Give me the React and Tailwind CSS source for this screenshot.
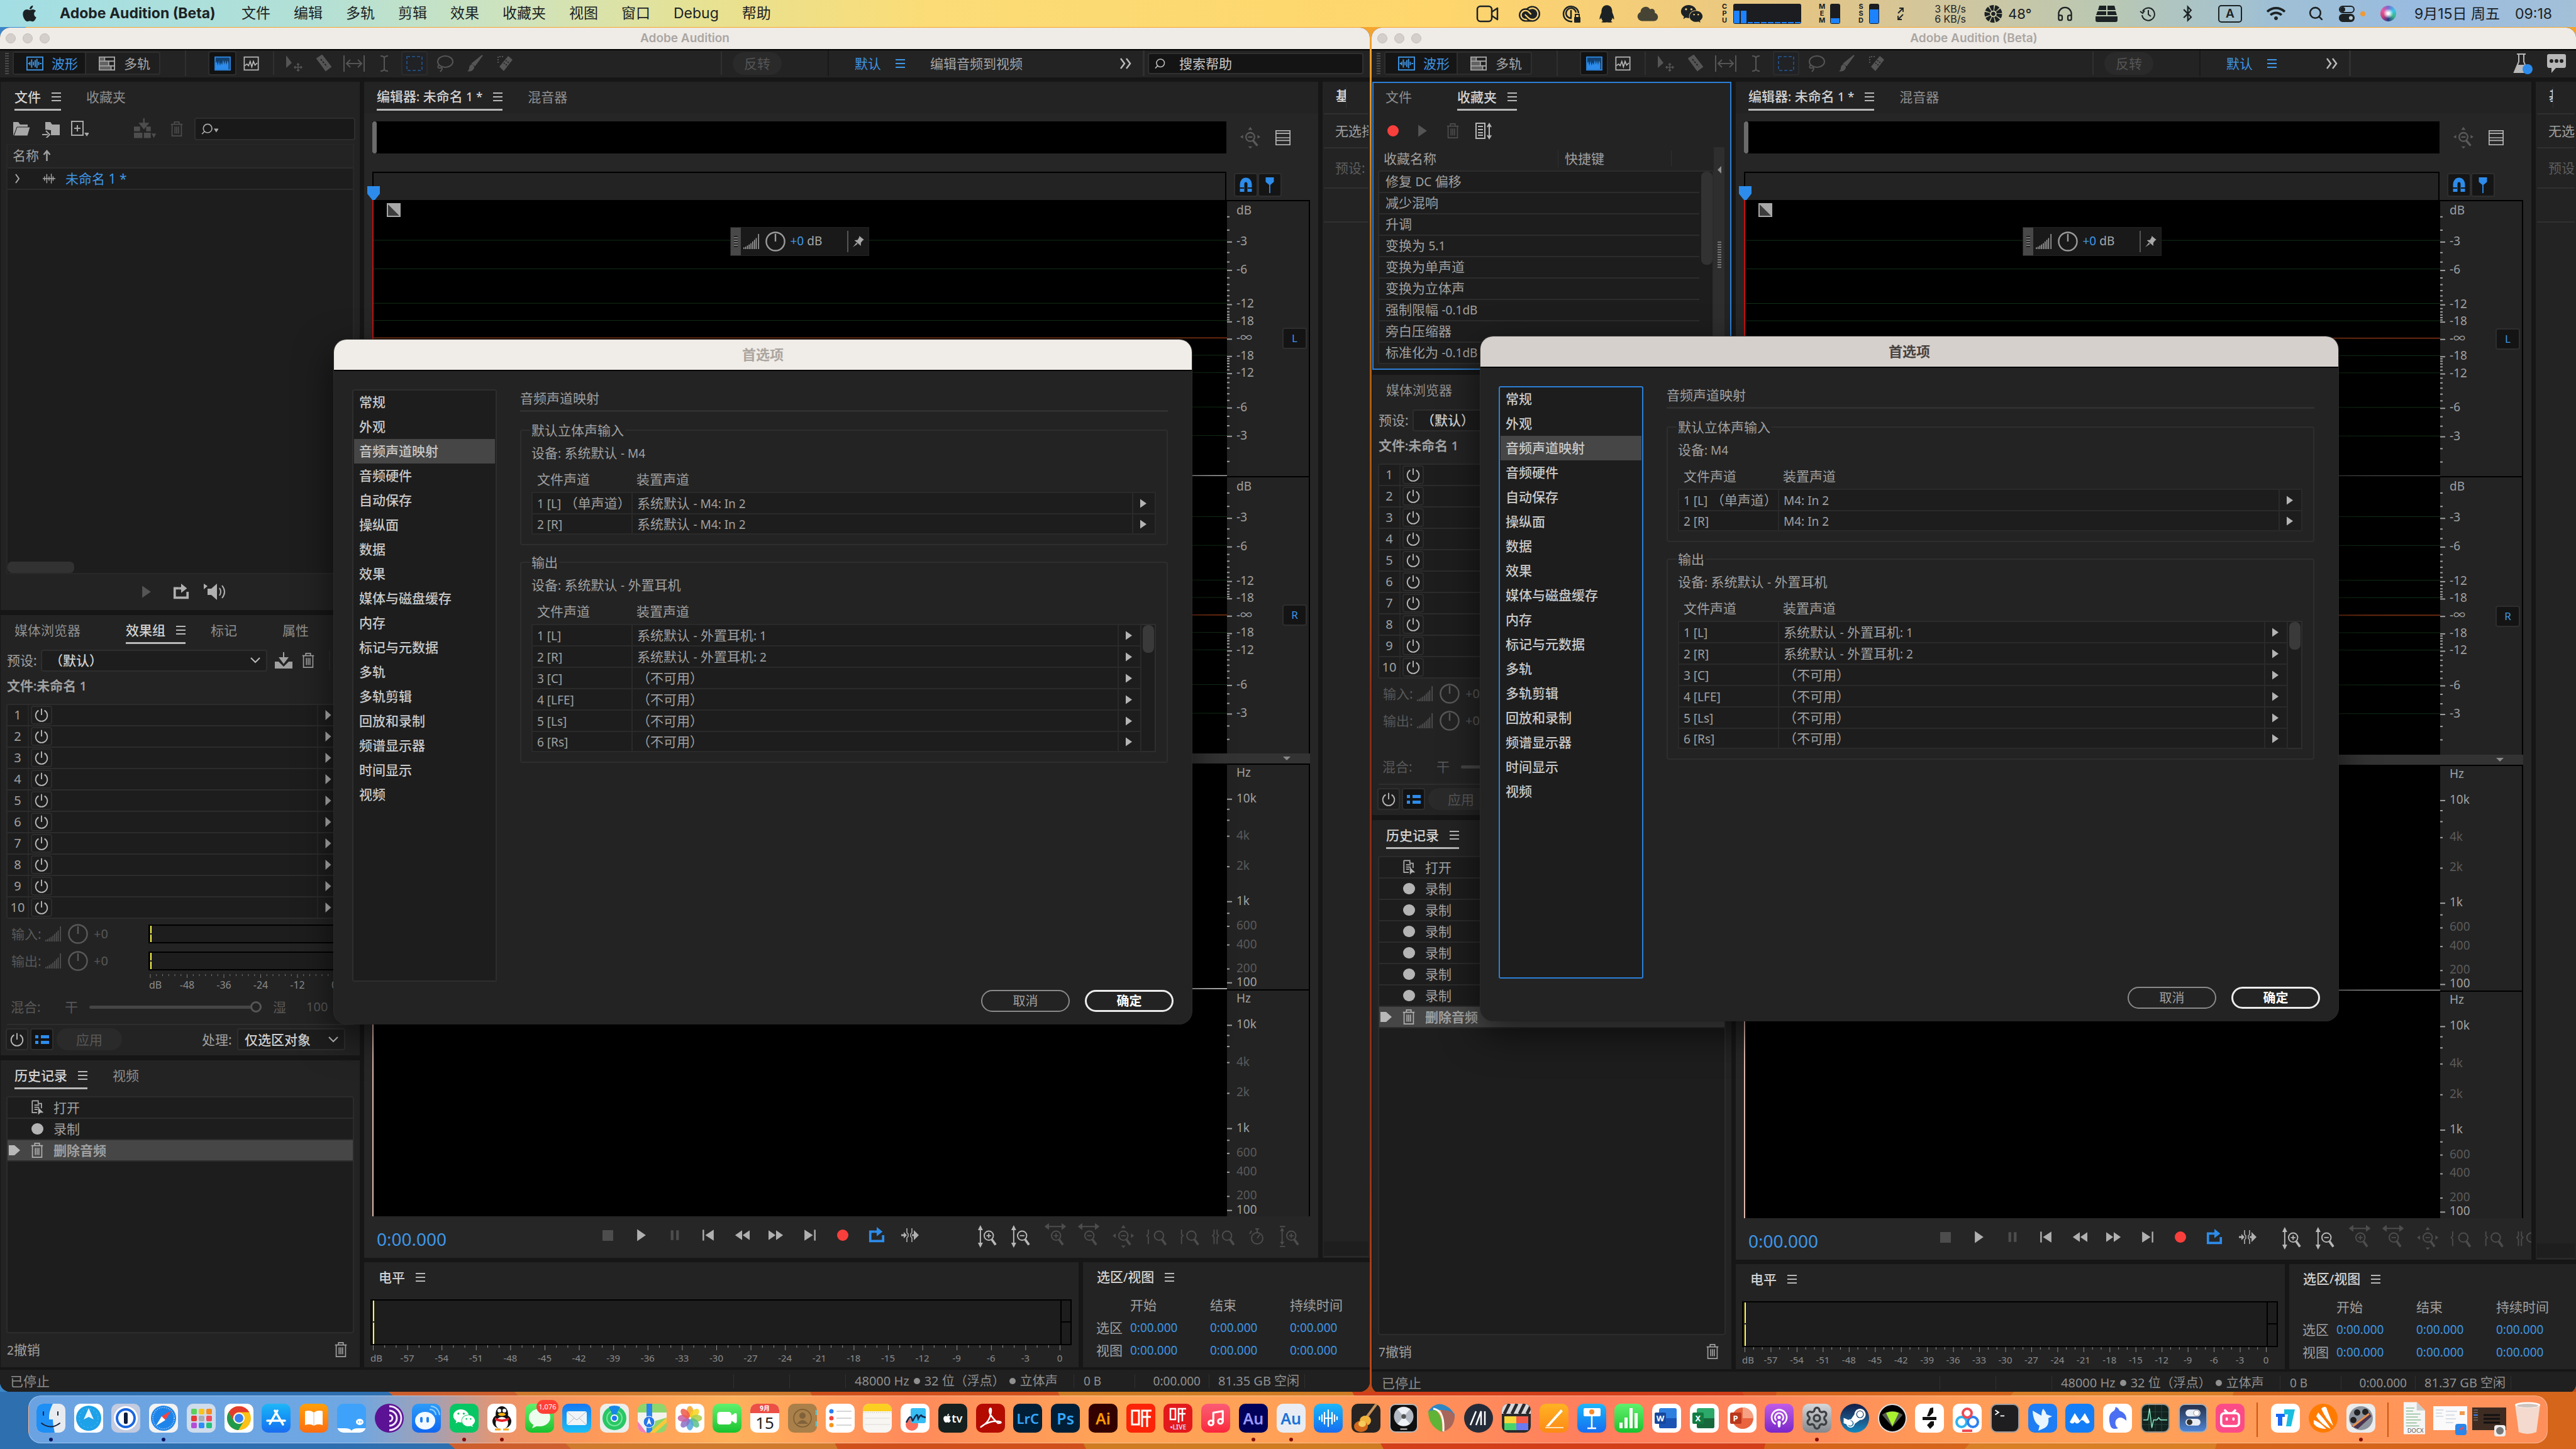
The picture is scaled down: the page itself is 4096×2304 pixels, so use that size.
import { Fragment } from "react";
import { FaApple, FaBluetoothB, FaWifi, FaWeixin, FaQq, FaSteamSymbol, FaCloud } from "react-icons/fa";
import { SiAdobecreativecloud, SiBilibili } from "react-icons/si";
import { Search, Headphones, Music, Video, Podcast, Settings } from "lucide-react";

// Latin runs sit one step smaller than the Chinese text around them
function Mix({ children }) {
    return String(children).split(/([\x21-\x7e]+(?: [\x21-\x7e]+)*)/).map((part, i) =>
        i % 2 ? <span key={i} className="text-[19px]">{part}</span> : <Fragment key={i}>{part}</Fragment>
    );
}

function MenuGlyph({ className = "" }) {
    return (
        <svg viewBox="0 0 15 14" className={`w-[15px] h-[14px] shrink-0 ${className}`} fill="none" stroke="currentColor" strokeWidth="2">
            <path d="M0 1h15M0 7h15M0 13h15" />
        </svg>
    );
}

function Ico({ size = "w-[28px] h-[28px]", className = "", children }) {
    return (
        <svg viewBox="0 0 28 28" className={`shrink-0 ${size} ${className}`} fill="none" stroke="currentColor" strokeWidth="2">
            {children}
        </svg>
    );
}

const WaveIcon = () => (
    <Ico size="w-[30px] h-[26px]">
        <rect x="1" y="3" width="27" height="22" />
        <path d="M3 14h3M6 11v6M9 7v14M12 11v6M15 8v12M18 6v16M21 11v6M23 14h3" />
    </Ico>
);
const MultiIcon = () => (
    <Ico size="w-[28px] h-[26px]">
        <rect x="1" y="3" width="26" height="22" />
        <path d="M1 10h26M1 18h26M10 3v7M17 10v8M21 18v7" />
        <path d="M2 4h7v5H2zM2 11h14v6H2zM2 19h18v5H2z" fill="currentColor" fillOpacity=".5" stroke="none" />
    </Ico>
);
const TrashIcon = ({ className }) => (
    <Ico size="w-[26px] h-[28px]" className={className}>
        <path d="M4 6h20M10 6V2h8v4M6 6v20h16V6M11 10v12M14 10v12M17 10v12" strokeWidth="1.8" />
    </Ico>
);
const PowerIcon = () => (
    <Ico size="w-[26px] h-[26px]">
        <path d="M14 3v11M9 6a10 10 0 1 0 10 0" />
    </Ico>
);
const LoopIcon = ({ className }) => (
    <Ico size="w-[28px] h-[26px]" className={className}>
        <path d="M10 8H3v16h22V14" strokeWidth="4" />
        <path d="M10 8h6" strokeWidth="4" />
        <path d="M14 0l10 8-10 8z" fill="currentColor" stroke="none" />
    </Ico>
);
const BarsIcon = ({ className }) => (
    <Ico size="w-[28px] h-[26px]" className={className}>
        <path d="M1 27v-3M4 27v-4M7 27v-6M10 27v-8M13 27V17M16 27V14M19 27V11M22 27V8M26 27V1" strokeWidth="1.6" />
    </Ico>
);
const KnobIcon = ({ className }) => (
    <Ico size="w-[34px] h-[34px]" className={className}>
        <circle cx="14" cy="14" r="12" />
        <path d="M14 4v10" />
    </Ico>
);

/* ---------- menu bar ---------- */

const menus = ["文件", "编辑", "多轨", "剪辑", "效果", "收藏夹", "视图", "窗口", "Debug", "帮助"];

function Stack({ word }) {
    return (
        <span className="w-[10px] flex flex-col items-center text-[11px] leading-[11px] font-bold">
            {word.split("").map((c, i) => <span key={i}>{c}</span>)}
        </span>
    );
}

function MenuBar() {
    return (
        <header className="h-[43px] shrink-0 flex items-center text-[22px] text-[#1c2224] font-['Inter','Noto_Sans_CJK_SC',sans-serif] bg-[linear-gradient(to_right,#a3dee4_0%,#b2e0d6_12%,#cfe3bd_20%,#e6e294_27%,#fbdc76_36%,#fed66c_56%,#f7cf77_62%,#e3c585_70%,#d3c69c_75%,#b9c8b4_82%,#9fc0d4_88%,#99bbe0_94%,#a3c0d8_100%)]">
            <FaApple className="ml-[34px] w-[26px] h-[29px]" />
            <nav className="ml-[35px] pb-[2px] flex items-center gap-[37px] whitespace-nowrap">
                <span className="text-[23px] w-[252px] font-bold">Adobe Audition (Beta)</span>
                {menus.map((m) => <a href="#menu" key={m} className="text-[23px]">{m}</a>)}
            </nav>
            <div className="ml-auto pr-[33px] flex items-center whitespace-nowrap">
                <svg viewBox="0 0 36 28" className="w-[36px] h-[28px]" fill="none" stroke="currentColor" strokeWidth="2.5">
                    <rect x="2" y="2" width="23" height="24" rx="5" /><path d="M25 11l9-6v18l-9-6" strokeLinejoin="round" />
                </svg>
                <SiAdobecreativecloud className="ml-[32px] w-[34px] h-[34px]" />
                <svg viewBox="0 0 30 30" className="ml-[35px] w-[30px] h-[30px]" fill="none" stroke="currentColor" strokeWidth="2.5">
                    <path d="M26 14A12 12 0 1 0 16 27M22 13a8 8 0 1 0-7 9M14 9v12" /><rect x="19" y="20" width="10" height="9" rx="1" fill="currentColor" stroke="none" /><path d="M21 20v-4h6v4" strokeWidth="2" />
                </svg>
                <FaQq className="ml-[29px] w-[24px] h-[30px]" />
                <FaCloud className="ml-[35px] w-[36px] h-[26px] opacity-80" />
                <FaWeixin className="ml-[34px] w-[36px] h-[32px]" />
                <span className="ml-[29px]"><Stack word="CPU" /></span>
                <div className="ml-[9px] w-[108px] h-[32px] rounded-[3px] bg-[#1b1d20] px-[1px] pb-[1px] flex items-end gap-[2px]">
                    {[20, 20, 2, 2, 2, 2, 2, 2, 2, 2].map((h, i) => <i key={i} className="flex-1 bg-[#1c82ff]" style={{ height: h }}></i>)}
                </div>
                <span className="ml-[28px]"><Stack word="MEM" /></span>
                <div className="ml-[8px] w-[16px] h-[32px] rounded-[3px] bg-[#1b1d20] p-[1px] flex items-end"><i className="w-full h-[8px] bg-[#1c82ff]"></i></div>
                <span className="ml-[28px]"><Stack word="SSD" /></span>
                <div className="ml-[8px] w-[16px] h-[32px] rounded-[3px] bg-[#1b1d20] p-[1px] flex items-end"><i className="w-full h-[22px] bg-[#1c82ff]"></i></div>
                <svg viewBox="0 0 10 22" className="ml-[29px] w-[10px] h-[22px]" fill="none" stroke="currentColor" strokeWidth="1.8"><path d="M1 10l8-8M3 2h6v6M9 12l-8 8M1 14v6h6" /></svg>
                <div className="ml-[49px] w-[50px] text-[16px] leading-[16px] text-right"><div>3 KB/s</div><div>6 KB/s</div></div>
                <svg viewBox="0 0 30 30" className="ml-[29px] w-[29px] h-[30px]" fill="none" stroke="currentColor">
                    <circle cx="15" cy="15" r="10" strokeWidth="9" strokeDasharray="5.5 1.5" /><circle cx="15" cy="15" r="3" fill="currentColor" />
                </svg>
                <span className="ml-[9px] w-[38px]">48°</span>
                <Headphones className="ml-[39px] w-[27px] h-[30px]" strokeWidth={2} />
                <svg viewBox="0 0 37 26" className="ml-[34px] w-[37px] h-[26px]" fill="currentColor"><path d="M7 0h11v7H5zM20 0h11l2 7H20zM4 9h14v6H2zM20 9h13l2 6H20zM1 17h35v6q0 3-3 3H4q-3 0-3-3z" /></svg>
                <svg viewBox="0 0 26 24" className="ml-[34px] w-[26px] h-[24px]" fill="none" stroke="currentColor" strokeWidth="2"><path d="M5 8a10 10 0 1 1-1 6M1 8l4 3 3-4M14 6v7l4 3" /></svg>
                <FaBluetoothB className="ml-[42px] w-[17px] h-[27px]" />
                <span className="ml-[40px] w-[38px] h-[28px] border-2 border-[#1c2224] rounded-[5px] flex items-center justify-center text-[19px] font-semibold">A</span>
                <FaWifi className="ml-[39px] w-[30px] h-[25px]" />
                <Search className="ml-[36px] w-[25px] h-[25px]" strokeWidth={2.5} />
                <svg viewBox="0 0 25 26" className="ml-[24px] w-[25px] h-[26px]" fill="none" stroke="currentColor" strokeWidth="2"><rect x="1" y="1" width="23" height="10" rx="5" /><circle cx="6" cy="6" r="3" fill="currentColor" /><rect x="1" y="14" width="23" height="11" rx="5" fill="currentColor" /><circle cx="19" cy="19.5" r="3" fill="#b9c9cf" stroke="none" /></svg>
                <i className="ml-[9px] w-[8px] h-[8px] rounded-full bg-[#f09a36]"></i>
                <i className="ml-[24px] w-[25px] h-[25px] rounded-full bg-[radial-gradient(#ffffff_8%,transparent_45%),conic-gradient(#7a6ad0,#3ac6e8,#38b48a,#2b3a88,#c8407a,#e85aa0,#7a6ad0)]"></i>
                <span className="ml-[29px] w-[145px] text-[23px]">9月15日 周五</span>
                <span className="ml-[15px] w-[64px] text-[23px]">09:18</span>
            </div>
        </header>
    );
}

/* ---------- shared panel parts ---------- */

function Tabs({ items, active, pad = "pl-[22px]", line = true }) {
    return (
        <div className={`h-[50px] shrink-0 flex gap-[40px] overflow-hidden ${pad}`}>
            {items.map((t) => (
                <button key={t} className={`h-[46px] flex items-center pt-[4px] gap-[17px] whitespace-nowrap border-b-[3px] ${t === active ? "text-[#d2d2d2] font-medium" : "text-[#8f8f8f]"} ${t === active && line ? "border-[#b8b8b8]" : "border-transparent"}`}>
                    <span><Mix>{t}</Mix></span>
                    <MenuGlyph className={t === active ? "text-[#b8b8b8]" : "invisible"} />
                </button>
            ))}
        </div>
    );
}

function Pick({ label, value, className }) {
    return (
        <label className={`flex items-center h-[35px] border-2 border-[#2e2e2e] bg-[#1d1d1d] rounded-[4px] text-[#d0d0d0] font-medium ${className}`}>
            <select aria-label={label} className="flex-1 min-w-0 appearance-none bg-transparent outline-none">
                <option>{value}</option>
            </select>
            <svg viewBox="0 0 16 10" className="w-[16px] h-[10px] mr-[9px]" fill="none" stroke="#b8b8b8" strokeWidth="2"><path d="M1 1l7 7 7-7" /></svg>
        </label>
    );
}

const Play = ({ className }) => <Ico size="w-[24px] h-[24px]" className={className}><path d="M6 3l16 11L6 25z" fill="currentColor" stroke="none" /></Ico>;

function AppToolbar({ beta }) {
    const tools = [
        <Ico key="move"><path d="M2 1v20l9-8z" fill="currentColor" stroke="none" /><path d="M15 20h12M21 14v12M19 16l2-2 2 2M19 24l2 2 2-2M17 18l-2 2 2 2M25 18l2 2-2 2" strokeWidth="1.5" /></Ico>,
        <Ico key="razor"><path d="M3 6l8-5 14 18-8 6z" fill="currentColor" /><path d="M9 7l10 12" stroke="#232323" strokeDasharray="3 2" /></Ico>,
        <Ico key="slip" size="w-[36px] h-[28px]"><path d="M-2 1v26M30 1v26M3 14h22M8 8l-6 6 6 6M20 8l6 6-6 6" /></Ico>,
        <Ico key="time"><path d="M8 2q6 0 6 4v16q0 4-6 4M20 2q-6 0-6 4M14 22q0 4 6 4" /></Ico>,
        <span key="marquee" className="w-[42px] h-[39px] border-2 border-[#2c2c2c] rounded-[4px] bg-[#202225] flex items-center justify-center text-[#244a77]"><Ico><rect x="2" y="3" width="24" height="22" strokeDasharray="5 3" /></Ico></span>,
        <Ico key="lasso"><ellipse cx="15" cy="11" rx="12" ry="9" /><path d="M5 16q-4 6 2 5t0 6" /></Ico>,
        <Ico key="brush"><path d="M26 1L14 17l-4-3z" fill="currentColor" /><path d="M9 15q6 3 3 8-4 5-10 3 3-1 3-5 0-4 4-6z" fill="currentColor" stroke="none" /></Ico>,
        <Ico key="heal"><path d="M5 19L19 2l7 6-14 18z" fill="currentColor" stroke="none" /><path d="M3 13V3h10" strokeDasharray="2 2" /><path d="M12 13l8 6M15 9l8 6" stroke="#232323" strokeDasharray="2 2" /></Ico>,
    ];
    return (
        <div className="h-[43px] shrink-0 pb-[2px] flex items-center bg-[#232323] whitespace-nowrap text-[#a6a6a6]">
            <span className="ml-[8px] w-[6px] h-[34px] bg-[repeating-linear-gradient(to_bottom,#4a4a4a_0_2px,transparent_2px_4px)]"></span>
            <div className="ml-[6px] w-[235px] h-[37px] shrink-0 flex rounded-[4px] border-2 border-[#2e2e2e] bg-[#1f1f1f]">
                <button className="w-[115px] pl-[18px] flex items-center gap-[12px] bg-[#151515] border-r-2 border-[#2e2e2e] text-[#3f96e6]"><WaveIcon />波形</button>
                <button className="flex-1 pl-[19px] flex items-center gap-[13px]"><MultiIcon />多轨</button>
            </div>
            <i className="ml-[39px] w-[2px] h-full bg-[#303030]"></i>
            <button aria-label="波形显示" className="ml-[35px] w-[45px] h-[39px] border-2 border-[#2e2e2e] bg-[#121212] rounded-[4px] flex items-center justify-center text-[#2d8ceb]">
                <Ico size="w-[30px] h-[24px]"><rect x="0" y="2" width="28" height="24" fill="#12406e" stroke="currentColor" /><path d="M1 25V14l2-4 2 8 2-9 2 9 2-6 2 5 2-10 2 9 2-8 2 9 2-9 2 6v11z" fill="currentColor" stroke="none" /></Ico>
            </button>
            <button aria-label="频谱显示" className="ml-[9px] text-[#b8b8b8]">
                <Ico size="w-[29px] h-[24px]"><rect x="1" y="2" width="26" height="24" /><path d="M2 18l4-3 3 3 3-8 3 10 3-10 3 7 4-4" /></Ico>
            </button>
            <i className="ml-[20px] w-[2px] h-[37px] bg-[#303030]"></i>
            <div className="ml-[7px] w-[384px] shrink-0 grid grid-cols-8 place-items-center text-[#555]">{tools}</div>
            <div className="ml-[319px] h-full flex items-center">
                <i className="w-[2px] h-[37px] bg-[#303030]"></i>
                <button disabled className="ml-[17px] w-[78px] h-[36px] rounded-full bg-[#2a2a2a] text-[#555]">反转</button>
                <i className="ml-[73px] w-[2px] h-full bg-[#181818]"></i>
                <button className="ml-[41px] flex items-center gap-[23px] text-[#3f96e6]">默认<MenuGlyph /></button>
            </div>
            {!beta && <button className="ml-[40px]">编辑音频到视频</button>}
            <button aria-label="更多" className="ml-auto mr-[17px]">
                <svg viewBox="0 0 20 18" className="w-[20px] h-[18px]" fill="none" stroke="#bbb" strokeWidth="2.5"><path d="M2 1l6 8-6 8M11 1l6 8-6 8" /></svg>
            </button>
            <div className="w-[361px] h-full shrink-0 border-l-[3px] border-[#303030] flex items-center">
                {beta ? (
                    <div className="ml-auto mr-[16px] flex items-center gap-[22px] text-[#b8b8b8]">
                        <svg viewBox="0 0 34 34" className="w-[34px] h-[34px]" fill="none" stroke="currentColor" strokeWidth="2"><path d="M8 2h14M11 2v12L4 31h22L19 14V2" /><path d="M9 20h12l5 11H4z" fill="currentColor" /><circle cx="25" cy="26" r="8" fill="#2d8ceb" stroke="none" /></svg>
                        <svg viewBox="0 0 30 30" className="w-[30px] h-[30px]"><path d="M3 0h24q3 0 3 3v15q0 4-3 4H14l-7 8v-8H3q-3 0-3-4V3q0-3 3-3z" fill="currentColor" /><circle cx="7" cy="11" r="3" fill="#222" /><circle cx="15" cy="11" r="3" fill="#222" /><circle cx="23" cy="11" r="3" fill="#222" /></svg>
                    </div>
                ) : (
                    <label className="ml-[5px] mr-[10px] flex-1 h-[34px] border-2 border-[#303030] rounded-[4px] bg-[#141414] flex items-center">
                        <Search className="ml-[8px] w-[22px] h-[22px] -scale-x-100 text-[#bbb]" />
                        <input aria-label="搜索帮助" placeholder="搜索帮助" className="ml-[21px] w-full bg-transparent outline-none placeholder:text-[#c8c8c8]" />
                    </label>
                )}
            </div>
        </div>
    );
}

/* ---------- left column panels ---------- */

function FilesPanel() {
    return (
        <section className="h-[840px] shrink-0 bg-[#232323] flex flex-col">
            <Tabs items={["文件", "收藏夹"]} active="文件" />
            <div className="h-[49px] pl-[19px] pr-[7px] flex items-center text-[#a8a8a8]">
                <Ico><path d="M1 25V3h8l3 4h12v4H7z" fill="currentColor" stroke="none" /><path d="M7 11h21l-4 14H2z" fill="currentColor" stroke="#232323" strokeWidth="1" /></Ico>
                <Ico className="ml-[19px]"><path d="M5 15V3h8l3 4h12v17H14v-8z" fill="currentColor" stroke="none" /><path d="M0 23h9M6 17l6 6-6 6" /></Ico>
                <Ico className="ml-[18px]"><rect x="1" y="2" width="18" height="22" /><path d="M10 8v10M5 13h10" /><path d="M21 20h8l-4 6z" fill="currentColor" stroke="none" /></Ico>
                <Ico size="w-[36px] h-[34px]" className="ml-[71px] text-[#4d4d4d]"><path d="M13 0v10M8 7l5 6 5-6z" fill="currentColor" /><path d="M0 11h8v6H0zM16 11h6v6h-6zM0 19h11v7H0zM13 19h9v7h-9z" fill="currentColor" stroke="none" /><path d="M23 20h6l-3 6z" fill="currentColor" stroke="none" /></Ico>
                <TrashIcon className="ml-[20px] text-[#4d4d4d]" />
                <label className="ml-auto w-[256px] h-[36px] border-2 border-[#2e2e2e] rounded-[4px] bg-[#191919] flex items-center">
                    <Search className="ml-[8px] w-[24px] h-[24px] -scale-x-100" />
                    <svg viewBox="0 0 8 6" className="w-[9px] h-[7px] mt-[6px]" fill="currentColor"><path d="M0 0h8L4 6z" /></svg>
                    <input aria-label="搜索文件" className="w-full bg-transparent outline-none" />
                </label>
            </div>
            <div className="mx-[9px] flex-1 flex flex-col border-2 border-[#282828] border-t">
                <div className="h-[36px] pl-[8px] pb-[2px] flex items-center gap-[5px] text-[#a0a0a0]">名称
                    <svg viewBox="0 0 14 18" className="w-[15px] h-[18px]" fill="none" stroke="currentColor" strokeWidth="2.5"><path d="M7 18V2M2 8l5-6 5 6" /></svg>
                </div>
                <div className="flex-1 flex flex-col bg-[#1d1d1d] border-t-2 border-[#2c2c2c]">
                    <div className="h-[34px] pl-[12px] flex items-center border-b-2 border-[#2c2c2c] text-[#3f96e6]">
                        <svg viewBox="0 0 8 16" className="w-[8px] h-[16px]" fill="none" stroke="#a8a8a8" strokeWidth="2"><path d="M1 1l5 7-5 7" /></svg>
                        <Ico size="w-[26px] h-[20px]" className="ml-[33px] text-[#a8a8a8]"><path d="M0 14h28M4 9v10M9 4v20M14 9v10M19 3v22M23 9v10" /></Ico>
                        <span className="ml-[13px]">未命名 1 *</span>
                    </div>
                    <i className="mt-auto w-[106px] h-[18px] rounded-[7px] bg-[#323232]"></i>
                </div>
            </div>
            <div className="h-[57px] pl-[220px] pb-[2px] flex items-center text-[#b0b0b0]">
                <Play className="text-[#555]" />
                <LoopIcon className="ml-[29px]" />
                <Ico size="w-[42px] h-[28px]" className="ml-[21px]"><path d="M-6 1l6 4-6 5zM0 9h6l9-8v26l-9-8H0z" fill="currentColor" stroke="none" /><path d="M19 8q4 6 0 12M23 4q8 10 0 20" /></Ico>
            </div>
        </section>
    );
}

const favorites = ["修复 DC 偏移", "减少混响", "升调", "变换为 5.1", "变换为单声道", "变换为立体声", "强制限幅 -0.1dB", "旁白压缩器", "标准化为 -0.1dB"];

function FavoritesPanel() {
    return (
        <section className="h-[458px] shrink-0 bg-[#232323] outline-2 -outline-offset-2 outline-[#2d7fd6] flex flex-col text-[#a0a0a0]">
            <Tabs items={["文件", "收藏夹"]} active="收藏夹" pad="pl-[21px]" />
            <div className="h-[54px] pl-[24px] pt-[2px] flex items-center">
                <i className="w-[18px] h-[18px] rounded-full bg-[#f93f3c]"></i>
                <Play className="ml-[26px] text-[#555]" />
                <TrashIcon className="ml-[23px] text-[#4d4d4d]" />
                <Ico className="ml-[22px] text-[#b8b8b8]"><rect x="2" y="2" width="14" height="24" /><path d="M5 7h8M5 12h8M5 17h8M5 21h8M23 5v19M20 8l3-5 3 5M20 21l3 5 3-5" /></Ico>
            </div>
            <div className="flex-1 pl-[9px] pb-[9px] flex min-h-0">
                <div className="w-[534px] flex flex-col">
                    <div className="h-[37px] shrink-0 pl-[9px] pb-[2px] flex items-center">
                        <span className="w-[277px]">收藏名称</span>
                        <span className="w-[180px] pl-[10px] border-l border-[#303030]">快捷键</span>
                        <i className="h-[25px] border-l border-[#303030]"></i>
                    </div>
                    <div className="flex-1 min-h-0 flex border-2 border-[#2c2c2c] rounded-[4px] bg-[#1d1d1d]">
                        <ul className="flex-1">
                            {favorites.map((f) => <li key={f} className="h-[34px] pl-[10px] pb-[2px] flex items-center border-b-2 border-[#2c2c2c] whitespace-pre"><span><Mix>{f}</Mix></span></li>)}
                        </ul>
                        <i className="ml-[3px] w-[18px] h-[148px] rounded-[8px] bg-[#323232]"></i>
                    </div>
                </div>
                <div className="w-[17px] bg-[#2e2e2e] flex flex-col items-center">
                    <svg viewBox="0 0 6 12" className="mt-[30px] w-[6px] h-[12px]" fill="#909090"><path d="M6 0v12L0 6z" /></svg>
                    <i className="mt-[108px] w-[6px] h-[43px] bg-[repeating-linear-gradient(to_bottom,#777_0_2px,transparent_2px_4px)]"></i>
                </div>
            </div>
        </section>
    );
}

function GainRow({ label }) {
    return (
        <div className="h-[43px] pl-[17px] flex items-center text-[#585858]">
            <span className="w-[53px]">{label}</span>
            <BarsIcon />
            <KnobIcon className="ml-[8px]" />
            <span className="ml-[8px] w-[87px] text-[20px]">+0</span>
            <div className="flex-1 mr-[10px] h-[30px] border-2 border-black bg-[#1d1d1d] pl-[1px] flex"><i className="w-[2px] h-full bg-[linear-gradient(#fff842_47%,#1d1d1d_47%_53%,#fff842_53%)]"></i></div>
        </div>
    );
}

function EffectsPanel({ beta }) {
    return (
        <section className="h-[700px] shrink-0 bg-[#232323] flex flex-col text-[#a0a0a0]">
            <Tabs items={["媒体浏览器", "效果组", "标记", "属性"]} active="效果组" />
            <div className="h-[44px] pl-[10px] flex items-center">
                <span className="w-[54px]">预设:</span>
                <Pick label="预设" value="（默认）" className="w-[360px] pl-[12px]" />
                <Ico className="ml-[12px]"><path d="M14 1v10M8 10l6 8 6-8z" fill="currentColor" /><path d="M0 16h6l8 8 8-8h6v11H0z" fill="currentColor" stroke="none" /></Ico>
                <TrashIcon className="ml-[12px]" />
                <i className="ml-[20px] w-[2px] h-[32px] bg-[#2c2c2c]"></i>
            </div>
            <div className="h-[38px] mb-[9px] pl-[10px] pb-[2px] flex items-center font-semibold"><span><Mix>文件:未命名 1</Mix></span></div>
            <ol className="mx-[9px] border-2 border-b-0 border-[#2c2c2c] rounded-[4px] bg-[#1d1d1d]">
                {[1, 2, 3, 4, 5, 6, 7, 8, 9, 10].map((n) => (
                    <li key={n} className="h-[34px] flex items-center border-b-2 border-[#2c2c2c] text-[20px]">
                        <span className="w-[34px] h-full border-r-2 border-[#272727] flex items-center justify-center">{n}</span>
                        <button aria-label={`效果 ${n}`} className="ml-[3px] w-[34px] h-[30px] border-2 border-[#2c2c2c] rounded-[4px] flex items-center justify-center text-[#b8b8b8]"><PowerIcon /></button>
                        <span className="ml-auto w-[57px] h-full pl-[11px] border-l-2 border-[#272727] flex items-center">
                            <svg viewBox="0 0 9 16" className="w-[10px] h-[16px]" fill="#b0b0b0"><path d="M0 0l9 8-9 8z" /></svg>
                        </span>
                    </li>
                ))}
            </ol>
            <div className="mt-[2px]"><GainRow label="输入:" /><GainRow label="输出:" /></div>
            <div className="h-[34px] pl-[236px] pr-[10px]">
                {!beta && (
                    <svg className="w-full h-full overflow-visible">
                        {Array.from({ length: 31 }, (_, i) => <line key={i} x1={2 + i * 9.75} x2={2 + i * 9.75} y1="0" y2={i % 6 ? 3 : 6} stroke="#777" />)}
                        {["dB", "-48", "-36", "-24", "-12", "0"].map((t, i) => <text key={t} x={i ? 2 + i * 58.5 : 10} y="23" textAnchor="middle" className="text-[16px]" fill="#8c8c8c">{t}</text>)}
                    </svg>
                )}
            </div>
            <div className="h-[36px] pl-[16px] flex items-center text-[#585858]">
                <span className="w-[86px]">混合:</span>
                <label htmlFor={beta ? "mix-beta" : "mix"}>干</label>
                <input id={beta ? "mix-beta" : "mix"} type="range" defaultValue="100" className="mx-[18px] w-[274px] h-[5px] appearance-none bg-[#454545] rounded-full [&::-webkit-slider-thumb]:appearance-none [&::-webkit-slider-thumb]:w-[18px] [&::-webkit-slider-thumb]:h-[18px] [&::-webkit-slider-thumb]:rounded-full [&::-webkit-slider-thumb]:border-[3px] [&::-webkit-slider-thumb]:border-[#555] [&::-webkit-slider-thumb]:bg-[#232323]" />
                <span>湿</span>
                <span className="ml-[32px] text-[20px]">100</span>
            </div>
            <hr className="mt-[9px] mx-[10px] border-t-2 border-[#2e2e2e]" />
            <div className="mt-[5px] pl-[8px] h-[35px] flex items-center">
                <button aria-label="开关" className="w-[36px] h-[35px] border-2 border-[#2e2e2e] rounded-[4px] bg-[#1d1d1d] flex items-center justify-center text-[#b8b8b8]"><PowerIcon /></button>
                <button aria-label="列表" className="ml-[3px] w-[37px] h-[35px] border-2 border-[#2e2e2e] rounded-[4px] bg-[#121212] flex items-center justify-center">
                    <svg viewBox="0 0 22 14" className="w-[22px] h-[14px]" fill="#2d8ceb"><path d="M0 0h5v5H0zM9 0h13v5H9zM0 9h5v5H0zM9 9h13v5H9z" /></svg>
                </button>
                <button disabled className="ml-[5px] w-[104px] h-[35px] rounded-full bg-[#2a2a2a] text-[#585858]">应用</button>
                <span className="ml-[127px] w-[56px]">处理:</span>
                <Pick label="处理" value="仅选区对象" className="w-[172px] pl-[10px]" />
            </div>
        </section>
    );
}

function HistoryPanel({ rows, undo }) {
    return (
        <section className="flex-1 min-h-0 bg-[#232323] flex flex-col text-[#a0a0a0]">
            <Tabs items={["历史记录", "视频"]} active="历史记录" />
            <ul className="mt-[7px] mx-[9px] flex-1 border-2 border-[#2c2c2c] rounded-[4px] bg-[#1d1d1d]">
                {rows.map((r, i) => (
                    <li key={i} className={`h-[34px] flex items-center border-b-2 border-[#2c2c2c] ${i === rows.length - 1 ? "bg-[#464646] font-semibold" : ""}`}>
                        <span className="w-[34px] pl-[2px]">
                            {i === rows.length - 1 && <svg viewBox="0 0 18 16" className="w-[18px] h-[16px]" fill="#b8b8b8"><path d="M0 0h9l9 8-9 8H0z" /></svg>}
                        </span>
                        <span className="w-[26px] mr-[13px] flex justify-center text-[#b0b0b0]">
                            {r === "打开" && <Ico size="w-[24px] h-[25px]"><path d="M5 1h11v5h6v9M5 1v22h9M9 9h9M9 13h9M9 17h6" /><path d="M16 13v14l4-4h6z" fill="currentColor" stroke="none" /></Ico>}
                            {r === "录制" && <i className="w-[19px] h-[18px] rounded-full bg-[#b4b4b4]"></i>}
                            {r === "删除音频" && <TrashIcon />}
                        </span>
                        {r}
                    </li>
                ))}
            </ul>
            <div className="h-[54px] pl-[10px] pr-[17px] pb-[2px] flex items-center justify-between"><span><Mix>{undo}</Mix></span><TrashIcon /></div>
        </section>
    );
}

/* ---------- editor ---------- */

const amp = (db) => 50 * Math.pow(10, -db / 20);
const dbMajor = [3, 6, 12, 18];
const dbMinor = [1, 2, 4, 5, 7, 8, 9, 10, 11, 13, 14, 15, 16, 17];

function WaveChannel({ badge, grow, last }) {
    return (
        <div className={`flex min-h-0 ${grow}`}>
            <svg className="flex-1 h-full bg-black">
                <line x1="1" x2="1" y1="0" y2="100%" stroke="#c4100c" strokeWidth="2" />
                {dbMajor.map((d) => (
                    <Fragment key={d}>
                        <line x1="2" x2="100%" y1={`${50 - amp(d)}%`} y2={`${50 - amp(d)}%`} stroke="#123016" />
                        <line x1="2" x2="100%" y1={`${50 + amp(d)}%`} y2={`${50 + amp(d)}%`} stroke="#123016" />
                    </Fragment>
                ))}
                <line x1="2" x2="100%" y1="50%" y2="50%" stroke="#6a2a10" strokeWidth="2" />
                {!last && <line x1="0" x2="100%" y1="100%" y2="100%" stroke="#aaa" strokeWidth="2" />}
            </svg>
            <div className="w-[132px] h-full border-t-2 border-r-2 border-black bg-[#232323] flex">
                <svg className="w-[84px] h-full overflow-hidden text-[19px]" fill="#a0a0a0">
                    <text x="15" y="14" dominantBaseline="central">dB</text>
                    {[-1, 1].map((s) => (
                        <Fragment key={s}>
                            {dbMinor.map((d) => <rect key={d} x="0" y={`${50 + s * amp(d)}%`} width="4" height="2" />)}
                            {dbMajor.map((d) => (
                                <Fragment key={d}>
                                    <rect x="0" y={`${50 + s * amp(d)}%`} width="8" height="2" />
                                    <text x="15" y={`${50 + s * amp(d)}%`} dy="-1" dominantBaseline="central">-{d}</text>
                                </Fragment>
                            ))}
                        </Fragment>
                    ))}
                    <rect x="0" y="50%" width="8" height="2" />
                    <text x="15" y="50%" dy="-1" dominantBaseline="central">-∞</text>
                </svg>
                <button className="self-center ml-[4px] w-[39px] h-[34px] border-2 border-[#2e2e2e] rounded-[4px] bg-[#141414] text-[#3f96e6] text-[17px]">{badge}</button>
            </div>
        </div>
    );
}

const freqs = [["10k", 15.1, 1], ["4k", 31.6, 0], ["2k", 45.2, 0], ["1k", 60.8, 1], ["600", 71.8, 0], ["400", 80.1, 0], ["200", 90.8, 0], ["100", 97, 1]];

function SpectrumChannel({ grow, first }) {
    return (
        <div className={`flex min-h-0 ${grow}`}>
            <svg className="flex-1 h-full bg-black">
                <line x1="1" x2="1" y1="0" y2="100%" stroke="#e0b8ae" strokeWidth="2" />
                {first && <line x1="0" x2="100%" y1="100%" y2="100%" stroke="#aaa" strokeWidth="3" />}
            </svg>
            <div className="w-[132px] h-full border-t-2 border-r-2 border-black bg-[#232323]">
                <svg className="w-full h-full text-[19px]" fill="#a0a0a0">
                    <text x="15" y="12" dominantBaseline="central">Hz</text>
                    {[19.6, 24.5, 66].map((p) => <rect key={p} x="0" y={`${p}%`} width="4" height="2" />)}
                    {freqs.map(([t, p, on]) => (
                        <Fragment key={t}>
                            <rect x="0" y={`${p}%`} width={on ? 8 : 4} height="2" />
                            <text x="15" y={`${p}%`} dy="-1" dominantBaseline="central" fill={on ? "#a0a0a0" : "#5a5a5a"}>{t}</text>
                        </Fragment>
                    ))}
                </svg>
            </div>
        </div>
    );
}

function Glass({ lead, sign, dim, off = 0 }) {
    return (
        <Ico size="w-[34px] h-[38px]" className={`overflow-visible ${dim ? "text-[#4d4d4d]" : "text-[#b8b8b8]"}`}>
            {lead}
            <circle cx={15 + off} cy="13" r="6" strokeWidth="1.6" />
            <path d={`M${19 + off} 18l5 7`} strokeWidth="3" />
            {sign && <path d={sign === "+" ? "M12 13h6M15 10v6" : "M12 13h6"} strokeWidth="1.5" />}
        </Ico>
    );
}

const vArrow = <path d="M4 3v22M2 5l2-4 2 4zM2 23l2 4 2-4z" strokeWidth="1.6" fill="currentColor" />;
const hArrow = <path d="M2 1h24M5-2L1 1l4 3zM23-2l4 3-4 3z" strokeWidth="1.5" fill="currentColor" />;

function Transport({ beta }) {
    return (
        <div className="h-[66px] shrink-0 pl-[20px] flex items-center overflow-hidden text-[#b0b0b0]">
            <span className={`mt-[6px] shrink-0 text-[28px] text-[#3f96e6] ${beta ? "w-[287px]" : "w-[341px]"}`}>0:00.000</span>
            <div className="w-[534px] shrink-0 pb-[6px] grid grid-cols-10 place-items-center">
                <button aria-label="停止"><i className="block w-[17px] h-[17px] bg-[#4d4d4d]"></i></button>
                <button aria-label="播放"><Play /></button>
                <button aria-label="暂停" className="text-[#4d4d4d]"><Ico size="w-[20px] h-[22px]"><path d="M8 3v22M20 3v22" strokeWidth="6" /></Ico></button>
                <button aria-label="开头"><Ico size="w-[24px] h-[22px]"><path d="M3 3v22" strokeWidth="3" /><path d="M24 3v22L7 14z" fill="currentColor" stroke="none" /></Ico></button>
                <button aria-label="快退"><Ico size="w-[28px] h-[24px]"><path d="M14 5v18L1 14zM28 5v18l-13-9z" fill="currentColor" stroke="none" /></Ico></button>
                <button aria-label="快进"><Ico size="w-[28px] h-[24px]"><path d="M0 5v18l13-9zM14 5v18l13-9z" fill="currentColor" stroke="none" /></Ico></button>
                <button aria-label="结尾"><Ico size="w-[24px] h-[22px]"><path d="M25 3v22" strokeWidth="3" /><path d="M4 3v22l17-11z" fill="currentColor" stroke="none" /></Ico></button>
                <button aria-label="录制"><i className="block w-[18px] h-[18px] rounded-full bg-[#f93f3c]"></i></button>
                <button aria-label="循环"><LoopIcon className="text-[#2d8ceb]" /></button>
                <button aria-label="跳过"><Ico><path d="M9 3v7l2 2v4l-2 2v7M17 3v7l-2 2v4l2 2v7" strokeWidth="1.6" /><path d="M0 14h4M4 9l5 5-5 5z" strokeWidth="3" fill="currentColor" stroke="none" /><path d="M0 14h7M17 14h4" strokeWidth="3" /><path d="M20 6l8 8-8 8z" fill="currentColor" stroke="none" /></Ico></button>
            </div>
            <div className={`w-[535px] shrink-0 pb-[2px] grid grid-cols-10 place-items-center ${beta ? "ml-[17px]" : "ml-auto mr-[17px]"}`}>
                <Glass lead={vArrow} sign="+" />
                <Glass lead={vArrow} sign="-" />
                <Glass dim lead={hArrow} sign="+" />
                <Glass dim lead={hArrow} sign="-" />
                <Glass dim sign="-" lead={<path d="M12 3h6l-3-4zM12 26h6l-3 3zM5 10v6l-4-3zM25 10v6l4-3z" fill="currentColor" stroke="none" />} />
                <Glass dim off={3} lead={<path d="M4 5v6l-2 2 2 2v9" strokeWidth="1.5" />} />
                <Glass dim off={1} lead={<path d="M3 5v6l2 2-2 2v9" strokeWidth="1.5" />} />
                <Glass dim off={4} lead={<path d="M2 5v6l-2 2 2 2v9M6 5v6l2 2-2 2v9" strokeWidth="1.5" />} />
                <Ico size="w-[28px] h-[34px]" className="text-[#4d4d4d]"><circle cx="14" cy="17" r="9" /><path d="M11 2h6M14 2v6M14 17l4-6M2 10l3-5" /></Ico>
                <Glass dim sign="+" lead={<path d="M0 1h7M0 27h7M3 4v20M1 7l2-3 2 3M1 21l2 3 2-3" strokeWidth="1.5" />} />
            </div>
        </div>
    );
}

function Editor({ beta }) {
    return (
        <section className="flex-1 min-w-0 bg-[#262626] flex flex-col">
            <div className="bg-[#232323]"><Tabs items={["编辑器: 未命名 1 *", "混音器"]} active="编辑器: 未命名 1 *" pad="pl-[20px]" /></div>
            <div className="mt-[13px] pl-[13px] flex items-center">
                <div className="flex-1 h-[51px] bg-black flex"><i className="w-[7px] h-full rounded-full bg-[#6b6b6b]"></i></div>
                <div className="w-[146px] pl-[22px] flex items-center gap-[23px]">
                    <Ico size="w-[32px] h-[34px]" className="text-[#5a5a5a] overflow-visible"><circle cx="14" cy="13" r="6" /><path d="M18 18l6 7" strokeWidth="3" /><path d="M11 13h6" /><path d="M11 3h6l-3-4zM11 26h6l-3 3zM4 10v5l-4-2zM24 10v5l4-2z" fill="currentColor" stroke="none" /></Ico>
                    <Ico size="w-[26px] h-[24px]" className="text-[#b4b4b4]"><rect x="1" y="1" width="26" height="26" /><path d="M1 6h26M1 14h26M1 19h26" /></Ico>
                </div>
            </div>
            <div className="mt-[29px] pl-[13px] flex">
                <div className="relative flex-1 h-[45px] border-2 border-b-0 border-black bg-[#232323]">
                    <svg viewBox="0 0 20 22" className="absolute -left-[10px] bottom-0 w-[20px] h-[22px]" fill="#2d8ceb"><path d="M0 0h20v12l-8 10H8L0 12z" /></svg>
                </div>
                <div className="w-[146px] pl-[12px] flex items-start pt-[2px] text-[#2d8ceb]">
                    <button aria-label="吸附" className="w-[38px] h-[38px] border-2 border-[#2e2e2e] bg-[#151515] rounded-[4px] flex items-center justify-center"><Ico size="w-[28px] h-[28px]"><path d="M8 25V13a6 7 0 0 1 12 0v12" strokeWidth="7" /><path d="M4 19h7M17 19h7" stroke="#151515" /></Ico></button>
                    <button aria-label="标记" className="w-[38px] h-[38px] border-2 border-[#2e2e2e] bg-[#151515] rounded-[4px] flex items-center justify-center"><Ico size="w-[26px] h-[28px]"><path d="M7 1h14v8l-6 5h-2L7 9z" fill="currentColor" stroke="none" /><path d="M14 14v14" /></Ico></button>
                </div>
            </div>
            <div className="relative flex-1 min-h-0 pl-[13px] pr-[13px] flex flex-col">
                <WaveChannel badge="L" grow="flex-[438_1_0%]" />
                <WaveChannel badge="R" grow="flex-[441_1_0%]" last />
                <div className="h-[16px] shrink-0 bg-[#333] flex items-center justify-end pr-[31px]"><svg viewBox="0 0 12 6" className="w-[12px] h-[6px]" fill="#8a8a8a"><path d="M0 0h12L6 6z" /></svg></div>
                <SpectrumChannel grow="flex-[358_1_0%]" first />
                <SpectrumChannel grow="flex-[361_1_0%]" />
                <svg viewBox="0 0 22 22" className="absolute left-[36px] top-[5px] w-[22px] h-[22px]"><rect x="1" y="1" width="20" height="20" fill="#3c3c3c" stroke="#a8a8a8" strokeWidth="2" /><path d="M1 1h20v20z" fill="#a8a8a8" /></svg>
                <div className="absolute top-[43px] left-[calc(50%_-_177px)] w-[221px] h-[46px] bg-[#191919] border border-[#222] flex items-center text-[#a8a8a8] text-[19px]">
                    <span className="w-[16px] h-full bg-[#484848] flex items-center justify-center"><i className="w-[6px] h-[18px] bg-[repeating-linear-gradient(to_bottom,#222_0_2px,#777_2px_4px)]"></i></span>
                    <BarsIcon className="ml-[3px]" />
                    <KnobIcon className="ml-[7px] text-[#9a9a9a]" />
                    <span className="ml-[7px] pb-[2px] whitespace-nowrap"><span className="text-[#3f96e6]">+0</span> dB</span>
                    <i className="ml-auto w-[2px] h-[34px] bg-[#555]"></i>
                    <Ico size="w-[18px] h-[18px]" className="mx-[7px]"><path d="M16 0l12 10-3 1-5 6v8L4 11l8-1 4-7zM9 17l3 3L0 28z" fill="currentColor" stroke="none" /></Ico>
                </div>
            </div>
            <Transport beta={beta} />
        </section>
    );
}

function SlimPanel({ width, clip }) {
    return (
        <section className={`${width} shrink-0 bg-[#232323] flex flex-col overflow-hidden whitespace-nowrap text-[#a0a0a0]`}>
            <div className="h-[50px] pl-[21px] flex items-center"><span className={`${clip} h-[34px] overflow-hidden border-r border-[#333] text-[#d0d0d0] font-bold`}>基</span></div>
            <div className="mx-[2px] h-[54px] pl-[18px] border-t-2 border-[#303030] flex items-center overflow-hidden">无选择</div>
            <div className="mx-[2px] h-[64px] pl-[18px] border-t-2 border-[#303030] flex items-center overflow-hidden text-[#5c5c5c]">预设:</div>
            <div className="mx-[2px] h-[56px] border-y-2 border-[#303030]"></div>
            <div className="mt-auto mx-[2px] mb-[1px] h-[25px] bg-[#1e1e1e] border-b-2 border-[#2a2a2a]"></div>
        </section>
    );
}

function Levels() {
    return (
        <section className="flex-1 min-w-0 bg-[#232323] flex flex-col">
            <Tabs items={["电平"]} active="电平" line={false} pad="pl-[23px]" />
            <div className="mt-[9px] ml-[10px] mr-[11px] h-[73px] border-2 border-black bg-[#1d1d1d] pl-[2px] flex justify-between">
                <i className="w-[2px] h-full bg-[linear-gradient(#fff842_48%,#1d1d1d_48%_51%,#fff842_51%)]"></i>
                <i className="w-[16px] h-full border-l-2 border-black bg-[linear-gradient(transparent_48%,#000_48%_51%,transparent_51%)]"></i>
            </div>
            <div className="ml-[14px] mr-[30px] h-[35px]">
                <svg className="w-full h-full overflow-visible text-[15px]" fill="#8c8c8c">
                    {Array.from({ length: 61 }, (_, i) => <rect key={i} x={`${(i * 100) / 60}%`} y="0" width="1" height={i % 3 ? 4 : 8} />)}
                    <text x="-4" y="26">dB</text>
                    {Array.from({ length: 20 }, (_, i) => <text key={i} x={`${(i + 1) * 5}%`} y="26" textAnchor="middle">{(i + 1) * 3 - 60}</text>)}
                </svg>
            </div>
        </section>
    );
}

function SelectionView() {
    return (
        <section className="w-[456px] shrink-0 bg-[#232323] flex flex-col text-[#a0a0a0]">
            <Tabs items={["选区/视图"]} active="选区/视图" line={false} />
            <table className="ml-[21px] w-[420px] table-fixed text-left">
                <thead>
                    <tr className="h-[36px]"><th className="w-[54px]"></th><th className="w-[127px] font-normal">开始</th><th className="w-[127px] font-normal">结束</th><th className="font-normal">持续时间</th></tr>
                </thead>
                <tbody>
                    {["选区", "视图"].map((r) => (
                        <tr key={r} className="h-[36px]">
                            <th className="font-normal">{r}</th>
                            {[0, 1, 2].map((c) => <td key={c} className="text-[19px] text-[#3f96e6]">0:00.000</td>)}
                        </tr>
                    ))}
                </tbody>
            </table>
        </section>
    );
}

function StatusBar({ free }) {
    return (
        <footer className="h-[35px] shrink-0 bg-[#202020] pl-[16px] pr-[103px] flex items-center text-[#909090] whitespace-nowrap">
            <span>已停止</span>
            <div className="ml-auto h-[22px] flex items-center [&>span]:border-l [&>span]:border-[#303030] [&>span]:h-[22px] [&>span]:flex [&>span]:items-center">
                <span className="w-[89px]"></span>
                <span className="w-[89px]"></span>
                <span className="w-[363px] pl-[14px] text-[20px] gap-[7px]">48000 Hz <i className="w-[10px] h-[10px] rounded-full bg-current"></i> 32 位（浮点）<i className="w-[10px] h-[10px] rounded-full bg-current"></i> 立体声</span>
                <span className="w-[97px] pl-[15px] text-[19px]">0 B</span>
                <span className="w-[118px] justify-end pr-[13px] text-[19px]">0:00.000</span>
                <span className="w-[153px] pl-[14px] border-r text-[20px]">{free} GB 空闲</span>
            </div>
        </footer>
    );
}

/* ---------- preferences ---------- */

const prefs = ["常规", "外观", "音频声道映射", "音频硬件", "自动保存", "操纵面", "数据", "效果", "媒体与磁盘缓存", "内存", "标记与元数据", "多轨", "多轨剪辑", "回放和录制", "频谱显示器", "时间显示", "视频"];

function ChannelMap({ legend, device, rows, scroll, className }) {
    return (
        <fieldset className={`border-2 border-[#2e2e2e] rounded-[4px] pl-[16px] pr-[17px] pb-[15px] ${className}`}>
            <legend className="h-[28px] leading-[28px] px-[2px] -ml-[2px]">{legend}</legend>
            <p className="h-[44px] leading-[44px]"><Mix>{device}</Mix></p>
            <table className="w-full table-fixed border-collapse text-left">
                <thead>
                    <tr className="h-[41px]"><th className="w-[159px] pl-[8px] font-normal">文件声道</th><th className="pl-[7px] font-normal">装置声道</th><th className="w-[36px]"></th>{scroll && <th className="w-[23px]"></th>}</tr>
                </thead>
                <tbody className="bg-[#1d1d1d] border-2 border-[#2e2e2e]">
                    {rows.map(([a, b], i) => (
                        <tr key={a} className="h-[34px] last:h-[32px]">
                            <td className="pl-[7px] border-2 border-[#2a2a2a] whitespace-pre leading-[28px]"><Mix>{a}</Mix></td>
                            <td className="pl-[7px] border-2 border-[#2a2a2a] whitespace-pre leading-[28px]"><Mix>{b}</Mix></td>
                            <td className="pl-[11px] border-2 border-[#2a2a2a]"><svg viewBox="0 0 10 14" className="w-[10px] h-[15px]" fill="#b4b4b4"><path d="M0 0l10 7-10 7z" /></svg></td>
                            {scroll && i === 0 && <td rowSpan={rows.length} className="align-top pl-[2px]"><i className="block w-[18px] h-[44px] rounded-[8px] bg-[#3a3a3a]"></i></td>}
                        </tr>
                    ))}
                </tbody>
            </table>
        </fieldset>
    );
}

function Preferences({ front, place, inDevice, inRow }) {
    return (
        <div role="dialog" aria-label="首选项" className={`absolute ${place} w-[1364px] h-[1088px] rounded-[20px] overflow-hidden bg-[#232323] flex flex-col text-[#a0a0a0] shadow-[0_20px_60px_rgba(0,0,0,.6),0_0_0_1px_#3c3c3c]`}>
            <h2 className={`h-[50px] shrink-0 pb-[2px] border-b-2 border-black flex items-center justify-center text-[22px] font-bold ${front ? "bg-[#d6d0cc] text-[#46423f]" : "bg-[#f0ece7] text-[#aba5a0]"}`}>首选项</h2>
            <div className="flex-1 pl-[29px] pr-[38px] pt-[29px] flex gap-[37px]">
                <ul className={`w-[230px] h-[942px] shrink-0 rounded-[3px] bg-[#1d1d1d] text-[#c8c8c8] font-medium ${front ? "outline-2 -outline-offset-2 outline-[#2d7fd6]" : "outline-2 -outline-offset-2 outline-[#2e2e2e]"} pt-[1px] px-[3px]`}>
                    {prefs.map((p) => <li key={p} className={`h-[39px] pl-[8px] pb-[2px] flex items-center ${p === "音频声道映射" ? "bg-[#464646]" : ""}`}>{p}</li>)}
                </ul>
                <div className="flex-1">
                    <h3 className="h-[36px] leading-[28px] border-b-[3px] border-[#303030]">音频声道映射</h3>
                    <ChannelMap className="mt-[15px]" legend="默认立体声输入" device={inDevice} rows={[["1 [L] （单声道）", inRow], ["2 [R]", inRow]]} />
                    <ChannelMap className="mt-[13px]" scroll legend="输出" device="设备: 系统默认 - 外置耳机" rows={[["1 [L]", "系统默认 - 外置耳机: 1"], ["2 [R]", "系统默认 - 外置耳机: 2"], ["3 [C]", "（不可用）"], ["4 [LFE]", "（不可用）"], ["5 [Ls]", "（不可用）"], ["6 [Rs]", "（不可用）"]]} />
                </div>
            </div>
            <div className="pb-[19px] pr-[29px] flex justify-end gap-[24px] text-[20px]">
                <button className="w-[141px] h-[35px] rounded-full border-2 border-[#8a8a8a] leading-none">取消</button>
                <button className="w-[141px] h-[35px] rounded-full border-[3px] border-[#ececec] text-white font-bold leading-none">确定</button>
            </div>
        </div>
    );
}

function AuditionWindow({ title, beta, className, children }) {
    return (
        <main className={`relative min-w-0 rounded-[16px] bg-[#161616] ${className}`}>
            <div className="h-full rounded-[16px] overflow-hidden flex flex-col">
                <div className="h-[36px] shrink-0 border-b-2 border-black bg-[#efebe7] grid grid-cols-3 items-center">
                    <div className="pl-[9px] flex gap-[11px]">{[0, 1, 2].map((i) => <i key={i} className="w-[16px] h-[16px] rounded-full bg-[#d4cfcb] border border-[#c2bdb9]"></i>)}</div>
                    <h1 className="text-center text-[19px] font-semibold text-[#aaa6a2] font-['Inter',sans-serif]">{title}</h1>
                </div>
                <AppToolbar beta={beta} />
                <div className="flex-1 min-h-0 pt-[7px] pb-[4px] flex gap-[7px]">
                    <div className="w-[572px] shrink-0 pl-px flex flex-col gap-[8px]">
                        {beta ? <FavoritesPanel /> : <FilesPanel />}
                        <EffectsPanel beta={beta} />
                        <HistoryPanel rows={beta ? ["打开", "录制", "录制", "录制", "录制", "录制", "录制", "删除音频"] : ["打开", "录制", "删除音频"]} undo={beta ? "7撤销" : "2撤销"} />
                    </div>
                    <div className="flex-1 min-w-0 flex flex-col gap-[7px]">
                        <div className="flex-1 min-h-0 flex gap-[7px]">
                            <Editor beta={beta} />
                            {beta ? <SlimPanel width="w-[64px]" clip="w-[7px]" /> : <SlimPanel width="w-[75px]" clip="w-[17px]" />}
                        </div>
                        <div className="h-[167px] shrink-0 flex gap-[7px]"><Levels /><SelectionView /></div>
                    </div>
                </div>
                <StatusBar free={beta ? "81.37" : "81.35"} />
            </div>
            {children}
        </main>
    );
}

/* ---------- dock ---------- */

const Art = ({ children }) => <svg viewBox="0 0 46 46" className="w-full h-full" fill="none">{children}</svg>;
const blue = "bg-linear-to-b from-[#1fb6f8] to-[#1a6cf0]";
const green = "bg-linear-to-b from-[#5ff16d] to-[#14c22d]";
const white = "bg-white";
const photoPetals = ["#f5a623", "#f7d31e", "#a9cf45", "#5bbf8a", "#53a6dc", "#8c6fc4", "#c75fa4", "#ee5a4a"];

const apps = [
    { name: "访达", bg: "bg-[#e8ecf0]", dot: 1, art: <Art><path d="M0 0h26q-7 13-6 25h6q0 10 3 21H0z" fill="#1e8ff5" /><path d="M11 13v5M34 13v5M8 31q15 11 29 0" stroke="#16233a" strokeWidth="2" strokeLinecap="round" /></Art> },
    { name: "导航", bg: white, art: <Art><circle cx="23" cy="23" r="20" fill="#1da1e8" /><path d="M23 7l8 18-8-4-8 4z" fill="#e9f6ff" /><circle cx="23" cy="23" r="15" stroke="#69c8f7" strokeDasharray="2 4" /></Art> },
    { name: "1Password", bg: "bg-[#c3cbe0]", art: <Art><circle cx="23" cy="23" r="19" fill="#fff" /><circle cx="23" cy="23" r="14" stroke="#1a66e0" strokeWidth="4" /><rect x="20" y="14" width="6" height="18" rx="2" fill="#0c1c3c" /></Art> },
    { name: "Safari", bg: "bg-[#f2f2f2]", dot: 1, art: <Art><circle cx="23" cy="23" r="20" fill="#1d84ea" /><circle cx="23" cy="23" r="17" stroke="#a7d3fa" strokeWidth="2" strokeDasharray="1 2" /><path d="M35 11L20 20l6 6z" fill="#f5433d" /><path d="M11 35l9-15 6 6z" fill="#fff" /></Art> },
    { name: "启动台", bg: "bg-[#cfdcec]", art: <Art>{["#5ad15c", "#f7c21c", "#f58e1e", "#e53a36", "#a9adb4", "#ef4c5e", "#b34fd6", "#2f8df5", "#25c07a"].map((c, i) => <rect key={i} x={7 + (i % 3) * 12} y={8 + Math.floor(i / 3) * 11} width="9" height="9" rx="2" fill={c} />)}</Art> },
    { name: "Chrome", bg: white, art: <Art><circle cx="23" cy="23" r="19" fill="#fbc116" /><path d="M6.5 13.5A19 19 0 0 1 39.5 13.5H23a9.5 9.5 0 0 0-8.2 14z" fill="#e33b2e" /><path d="M6.5 13.5A19 19 0 0 0 22 42l9-14.500a9.5 9.5 0 0 1-16.2 0z" fill="#229a4c" /><circle cx="23" cy="23" r="9" fill="#fff" /><circle cx="23" cy="23" r="7" fill="#3a7ff0" /></Art> },
    { name: "App Store", bg: blue, art: <Art><path d="M25 11L13 32M21 11l13 22M9 27h28" stroke="#fff" strokeWidth="3.5" strokeLinecap="round" /></Art> },
    { name: "图书", bg: "bg-linear-to-b from-[#ff9f0a] to-[#fc6d12]", art: <Art><path d="M23 14q-6-5-14-2v22q8-3 14 1 6-4 14-1V12q-8-3-14 2z" fill="#fff" /><path d="M23 14v21" stroke="#e8b98a" /></Art> },
    { name: "阅读", bg: "bg-[#3ea2fb]", art: <Art><path d="M0 46v-7h12q9 0 11 4 2-4 11-4h12v7z" fill="#fff" /><ellipse cx="36" cy="29" rx="6" ry="5" fill="#fff" /><path d="M34 28v2M38 28v2" stroke="#3ea2fb" strokeWidth="1.5" /></Art> },
    { name: "Tor", bg: "bg-[#5c1294] rounded-full", art: <Art><path d="M23 4a19 19 0 0 1 0 38M23 11a12 12 0 0 1 0 24M23 18a5 5 0 0 1 0 10" stroke="#f2e6fb" strokeWidth="3" /></Art> },
    { name: "云助手", bg: "bg-linear-to-b from-[#2d9bf8] to-[#1266f0]", art: <Art><ellipse cx="21" cy="27" rx="16" ry="14" fill="#f2f9ff" /><path d="M15 23v5M25 23v5" stroke="#1f7ff0" strokeWidth="4" strokeLinecap="round" /><path d="M28 9q9 0 10 9M30 4q12 1 14 14" stroke="#8fd0ff" strokeWidth="2" /></Art> },
    { name: "微信", bg: "bg-[#07c765]", dot: 2, art: <FaWeixin className="w-full h-full p-[5px] text-white" /> },
    { name: "QQ", bg: white, dot: 2, art: <Art><ellipse cx="23" cy="28" rx="15" ry="12" fill="#111" /><ellipse cx="23" cy="16" rx="10" ry="12" fill="#111" /><ellipse cx="23" cy="31" rx="10" ry="10" fill="#fff" /><circle cx="19" cy="11" r="3" fill="#fff" /><circle cx="27" cy="11" r="3" fill="#fff" /><ellipse cx="23" cy="17" rx="6" ry="2.5" fill="#f9b414" /><path d="M12 22q11 6 22 0v4q-11 6-22 0z" fill="#e7202b" /><path d="M12 41h9M25 41h9" stroke="#f9a514" strokeWidth="3" /></Art> },
    { name: "信息", bg: green, badge: "1,076", art: <Art><ellipse cx="23" cy="22" rx="17" ry="14" fill="#ecfdee" /><path d="M14 32l-3 7 9-4z" fill="#ecfdee" /></Art> },
    { name: "邮件", bg: "bg-linear-to-b from-[#1a78f2] to-[#1fc0f6]", art: <Art><rect x="7" y="12" width="32" height="22" rx="3" fill="#f1f4f7" /><path d="M8 13l15 13 15-13M8 33l11-10M38 33L27 23" stroke="#b0b7bf" /></Art> },
    { name: "查找", bg: "bg-[#eceeec]", art: <Art><circle cx="23" cy="23" r="19" fill="#29c765" /><circle cx="23" cy="23" r="12" stroke="#7be69f" strokeWidth="2" /><path d="M23 23L14 5q9-4 18 0z" fill="#1787e8" /><circle cx="23" cy="23" r="5" fill="#1d74f5" stroke="#fff" strokeWidth="2" /></Art> },
    { name: "地图", bg: "bg-[#8ed66b]", art: <Art><path d="M0 14h46v8L26 28 14 46H0z" fill="#f3f3ee" /><path d="M14 0h9v46h-9z" fill="#2b85ee" /><path d="M0 46V28l14 18z" fill="#f27fb4" /><path d="M46 22v8L28 46h-9z" fill="#f9c93a" /><circle cx="18" cy="29" r="9" fill="#2876e8" stroke="#fff" /><path d="M18 22l4 12-4-3-4 3z" fill="#fff" /></Art> },
    { name: "照片", bg: white, art: <Art>{photoPetals.map((c, i) => <ellipse key={i} cx="23" cy="12.5" rx="5.5" ry="9" fill={c} opacity=".85" transform={`rotate(${i * 45} 23 23)`} />)}</Art> },
    { name: "FaceTime", bg: green, art: <Video className="w-full h-full p-[6px] text-white fill-white" /> },
    { name: "日历", bg: white, art: <div className="w-full h-full flex flex-col items-center font-normal"><span className="w-full h-[15px] leading-[15px] text-center text-[10px] font-bold text-white bg-[#ec4f46]">9月</span><span className="leading-[30px] text-[26px] text-[#222]">15</span></div> },
    { name: "通讯录", bg: "bg-[#a97f4a]", art: <Art><circle cx="23" cy="23" r="14" stroke="#7a5c32" strokeWidth="1.5" /><circle cx="23" cy="19" r="5" fill="#80623a" /><path d="M14 32q9-12 18 0z" fill="#80623a" /><path d="M45 10v8M45 28v8" stroke="#5ac0c8" strokeWidth="3" /></Art> },
    { name: "提醒事项", bg: white, art: <Art><circle cx="9" cy="12" r="3.5" fill="#2a7ef0" /><circle cx="9" cy="23" r="3.5" fill="#f0443b" /><circle cx="9" cy="34" r="3.5" fill="#f5961e" /><path d="M17 12h24M17 23h24M17 34h24" stroke="#c9c9c9" strokeWidth="1.5" /></Art> },
    { name: "备忘录", bg: "bg-[#f7f6f2]", art: <Art><path d="M0 0h46v12H0z" fill="#fbcf22" /><path d="M0 14h46" stroke="#b9b5a6" strokeDasharray="1 2" /><path d="M3 23h40M3 33h40" stroke="#dcdad2" /></Art> },
    { name: "无边记", bg: white, art: <Art><circle cx="18" cy="33" r="10" fill="#fb6e5c" /><rect x="16" y="7" width="24" height="24" rx="3" fill="#36bdf3" /><path d="M9 30q6-12 8-8t2 6q7-14 8-9t1 5q5-9 6-4l6 2" stroke="#142b50" strokeWidth="2.5" /></Art> },
    { name: "TV", bg: "bg-[#16211f]", art: <div className="w-full h-full flex items-center justify-center text-white text-[18px]"><FaApple className="w-[14px] h-[16px]" />tv</div> },
    { name: "Acrobat", bg: "bg-[#b30b00]", art: <Art><path d="M9 36q14-8 15-25 0-5-2-3-4 8 13 23 6 0 4-2-10-4-26 4-8 6-4 3z" stroke="#fff" strokeWidth="2.5" /></Art> },
    { name: "Lightroom Classic", bg: "bg-[#001e36] text-[#35a8ff]", text: "LrC" },
    { name: "Photoshop", bg: "bg-[#001e36] text-[#35a8ff]", text: "Ps" },
    { name: "Illustrator", bg: "bg-[#330000] text-[#ff9a00]", text: "Ai" },
    { name: "OFFLINE", bg: "bg-[#fb2408] rounded-[8px]", art: <Art><path d="M9 11h11v22H9zM25 37V11h15M25 21h14M33 11v26" stroke="#fff" strokeWidth="3" /></Art> },
    { name: "OFFLINE LIVE", bg: "bg-[#e3191c]", art: <div className="w-full h-full flex flex-col items-center"><svg viewBox="0 0 46 32" className="h-[32px]" fill="none"><path d="M11 8h8v17h-8zM24 30V8h12M24 16h11M30 8v20" stroke="#fff" strokeWidth="2.5" /></svg><span className="text-[10px] leading-[10px] font-bold text-[#d9c9f4]">•LIVE</span></div> },
    { name: "音乐", bg: "bg-linear-to-b from-[#fb5c74] to-[#fa233b]", art: <Music className="w-full h-full p-[8px] text-white" strokeWidth={2.5} /> },
    { name: "Audition", bg: "bg-[#00005b] text-[#9999ff]", text: "Au", dot: 2 },
    { name: "Audition Beta", bg: "bg-[#e9edf3] text-[#1a73d8]", text: "Au", dot: 2 },
    { name: "音频", bg: blue, art: <Art><path d="M9 21v4M13 18v10M17 14v18M23 10v26M29 14v18M33 18v10M37 21v4M17 23h12" stroke="#fff" strokeWidth="2.2" strokeLinecap="round" /></Art> },
    { name: "库乐队", bg: "bg-[#262322]", art: <Art><path d="M40 0L22 24" stroke="#c9935b" strokeWidth="4" /><ellipse cx="22" cy="27" rx="9" ry="8" fill="#f2b33b" /><ellipse cx="15" cy="36" rx="11" ry="9" fill="#d4691c" /><ellipse cx="17" cy="32" rx="6" ry="5" fill="#f6cb5c" /></Art> },
    { name: "Logic Pro", bg: "bg-[#0f0f10] border-2 border-[#b5b5b8]", art: <Art><circle cx="23" cy="20" r="17" fill="#b4bac4" /><path d="M23 20L12 7q11-7 22 0zM23 20L12 33q11 7 22 0z" fill="#eef1f6" /><circle cx="23" cy="20" r="4" fill="#555" /><path d="M17 42h12" stroke="#ddd" strokeWidth="2" /></Art> },
    { name: "REAPER", bg: "bg-transparent rounded-none", art: <Art><path d="M2 12Q12-2 24 1t20 16q0 6-2 8L22 10z" fill="#2d87c4" /><path d="M2 12l12-2q12 12 10 35Q2 36 2 12z" fill="#5fb336" /><path d="M22 10q22 0 22 12-2 18-20 23 4-20-2-35z" fill="#a8675a" /><path d="M10 8q18 2 16 36" stroke="#fff" strokeWidth="3" /></Art> },
    { name: "Arturia", bg: "bg-[#242b38] rounded-full", art: <Art><path d="M10 34l9-22M19 34l8-22v22M33 12v22" stroke="#fff" strokeWidth="2.5" /></Art> },
    { name: "Final Cut Pro", bg: "bg-[#2a2a2d]", art: <Art><path d="M0 0h46v16H0z" fill="#d8d8dc" /><path d="M4 16L12 0M16 16L24 0M28 16L36 0M40 16l8-16" stroke="#2a2a2d" strokeWidth="5" /><path d="M4 20h20v11H4z" fill="#f6d638" /><path d="M23 20h19v11H23z" fill="#f25b4a" /><path d="M4 31h20v11H4z" fill="#49d26a" /><path d="M23 31h19v11H23z" fill="#6a7af0" /></Art> },
    { name: "Pages", bg: "bg-linear-to-b from-[#ffb223] to-[#fd8a16]", art: <Art><path d="M10 36L34 9l3 3-22 24z" fill="#fff" /><path d="M9 38h29" stroke="#ffe1b4" strokeWidth="2" /></Art> },
    { name: "Keynote", bg: blue, art: <Art><rect x="10" y="7" width="27" height="13" rx="2" fill="#fff" /><circle cx="23" cy="13" r="4" fill="#f58b2a" /><path d="M23 20v18M16 39h14" stroke="#fff" strokeWidth="2.5" /></Art> },
    { name: "Numbers", bg: green, art: <Art><path d="M8 30h5v9H8zM16 22h5v17h-5zM24 7h5v32h-5zM32 15h5v24h-5z" fill="#fff" /></Art> },
    { name: "Word", bg: white, office: "W", art: <Art><rect x="11" y="7" width="28" height="32" rx="3" fill="#2f7fe0" /><path d="M11 23h28v13q0 3-3 3H14q-3 0-3-3z" fill="#1b53b4" /></Art>, chip: "bg-[#17479e]" },
    { name: "Excel", bg: white, office: "X", art: <Art><rect x="11" y="7" width="28" height="32" rx="3" fill="#2ba86a" /><path d="M11 23h28v13q0 3-3 3H14q-3 0-3-3z" fill="#17693c" /></Art>, chip: "bg-[#107c41]" },
    { name: "PowerPoint", bg: white, office: "P", art: <Art><circle cx="24" cy="23" r="17" fill="#e9643f" /><path d="M24 6a17 17 0 0 1 17 17H24z" fill="#f7a184" /></Art>, chip: "bg-[#b9371c]" },
    { name: "播客", bg: "bg-linear-to-b from-[#c05be8] to-[#7a25c8]", art: <Podcast className="w-full h-full p-[7px] text-white" strokeWidth={2} /> },
    { name: "系统设置", bg: "bg-linear-to-b from-[#d5d7da] to-[#85888c]", dot: 2, art: <Settings className="w-full h-full p-[3px] text-[#3d4043]" strokeWidth={2} /> },
    { name: "Steam", bg: "bg-linear-to-b from-[#121c46] to-[#1389c0] rounded-full", art: <FaSteamSymbol className="w-full h-full p-[3px] text-white" /> },
    { name: "Surge", bg: "bg-black rounded-full border-2 border-[#ddd]", art: <Art><path d="M5 17q18-12 36 0L23 38z" fill="#555a52" /><path d="M12 14q11-5 22 0L23 37z" fill="#a8f230" /></Art> },
    { name: "剪映", bg: white, art: <Art><path d="M24 7l5-1v8l-6 6h-4zM12 21h22v5H12zM19 34l6-6h5v6l-6 6z" fill="#111" /></Art> },
    { name: "百度网盘", bg: white, art: <Art><circle cx="14" cy="29" r="8" stroke="#2fb4ee" strokeWidth="4" /><circle cx="32" cy="29" r="8" stroke="#2f80ee" strokeWidth="4" /><circle cx="23" cy="15" r="7" stroke="#ef4a53" strokeWidth="4" /><path d="M15 43h16" stroke="#ef4a53" strokeWidth="4" /></Art> },
    { name: "终端", bg: "bg-[#1e1e20] border-2 border-[#9b9b9f]", art: <Art><path d="M6 9l6 4-6 4M15 19h7" stroke="#fff" strokeWidth="2" /></Art> },
    { name: "云雀", bg: "bg-[#1e7df2]", art: <Art><path d="M7 11l14 8q0-8 3-11 4 5 5 9l9 3-6 3q2 13-9 17l-7 3 2-8Q8 30 7 11z" fill="#e9f5ff" /></Art> },
    { name: "MindX", bg: "bg-[#147ef6]", art: <Art><path d="M7 29l8-14 8 12 8-12 8 14q-4 5-8 0-5-6-8 0-5 5-8 0-4 5-8 0z" fill="#fff" /></Art> },
    { name: "海豚", bg: white, art: <Art><path d="M12 36Q6 18 16 12q3-1 4-7 5 2 6 6 12 4 11 16-11-10-17 0-2 8 4 12Q15 42 12 36z" fill="#4b6ff2" /></Art> },
    { name: "活动监视器", bg: "bg-[#12221f] border-2 border-[#8e9290]", art: <Art><path d="M0 12h46M0 23h46M0 34h46M12 0v46M23 0v46M34 0v46" stroke="#244a41" /><path d="M2 26h8l3-20 4 34 3-14h6l3-4 3 4h12" stroke="#8df0cb" strokeWidth="1.5" /></Art> },
    { name: "显示器", bg: "bg-linear-to-b from-[#24304a] to-[#4f86d6] border-2 border-[#a6acb5]", art: <Art><rect x="10" y="8" width="26" height="12" rx="6" fill="#e9eef5" /><rect x="10" y="24" width="26" height="12" rx="6" fill="#e9eef5" /><circle cx="29" cy="14" r="5" fill="#fff" stroke="#888" /><circle cx="17" cy="30" r="5" fill="#333" /></Art> },
    { name: "哔哩哔哩", bg: "bg-[#fb4c88]", art: <SiBilibili className="w-full h-full p-[7px] text-white" /> },
];

const recents = [
    { name: "腾讯文档", bg: white, art: <Art><path d="M8 16h14v5h-4v14h-7V21H8z" fill="#1769f5" /><path d="M21 9h17l-6 27h-8l3-19h-6z" fill="#19bfe0" /></Art> },
    { name: "Avast", bg: "bg-[#ff7b00] rounded-full", art: <Art><path d="M22 6q6-3 7 3l10 26Q28 26 20 8zM15 14q13 14 20 26-14-6-23-20zM8 26q8 2 20 14-14 0-20-8z" fill="#fff" /></Art> },
    { name: "影像", bg: "bg-[#ececec]", dot: 2, art: <Art><circle cx="23" cy="23" r="19" fill="#8c939c" /><circle cx="17" cy="14" r="5" fill="#222" /><circle cx="30" cy="13" r="5" fill="#222" /><circle cx="11" cy="26" r="5" fill="#222" /><path d="M8 36L36 14l4 6-22 20z" fill="#4a3550" /><path d="M10 36l26-20" stroke="#e89050" strokeWidth="3" /></Art> },
];

function DockApp({ app }) {
    return (
        <a href="#app" title={app.name} className="flex-1 relative flex flex-col items-center pt-[12px]">
            <span className={`relative w-[46px] h-[46px] overflow-hidden flex items-center justify-center font-semibold ${app.bg.includes("rounded") ? "" : "rounded-[10px]"} ${app.bg}`}>
                {app.text ? <span className={app.text.length > 2 ? "text-[22px]" : "text-[25px]"}>{app.text}</span> : app.art}
                {app.office && <span className={`absolute left-[4px] top-[14px] w-[18px] h-[18px] rounded-[2px] text-white text-[13px] leading-[18px] text-center font-bold ${app.chip}`}>{app.office}</span>}
            </span>
            {app.badge && <span className="absolute top-[6px] right-0 h-[22px] px-[3px] rounded-full bg-[#ff4035] text-white text-[11px] leading-[22px]">{app.badge}</span>}
            {app.dot && <i className={`mt-[8px] w-[6px] h-[6px] rounded-full ${app.dot === 1 ? "bg-[#0a1560]" : "bg-[#860d06]"}`}></i>}
        </a>
    );
}

function Dock() {
    return (
        <div className="relative h-[88px] shrink-0">
            <svg viewBox="0 0 4096 91" preserveAspectRatio="none" className="absolute inset-x-0 bottom-0 w-full h-[91px]">
                <path d="M0 0h4096v91H0z" fill="#2e6fb0" />
                <path d="M618 0h3478v91H724z" fill="#cf7a2c" />
                <path d="M618 0h200l90 91H724z" fill="#cd5f2e" />
                <path d="M1288 0h2808v91H1332z" fill="#d0501b" />
                <path d="M1682 0h720v91H1727z" fill="#d07c22" />
                <path d="M2150 0h620l50 91H2200z" fill="#d23f19" />
                <path d="M2825 0h1271v91H2805z" fill="#d5651b" />
                <path d="M3202 0h350l-30 91h-398z" fill="#d97f25" />
            </svg>
            <div className="relative mt-[3px] mx-[45px] h-[76px] px-[5px] rounded-[20px] border border-white/35 flex bg-[linear-gradient(to_right,#6ba3e2_0%,#6ea7e2_13%,#a3a0b4_16%,#ee9468_19%,#ff9a58_23%,#ffb15b_28%,#ff8a5b_35%,#ffa457_43%,#ffa056_50%,#ff7e5e_62%,#ff875c_69%,#ff9b58_76%,#ffa058_84%,#ff8f5a_100%)]">
                {apps.map((a) => <DockApp key={a.name} app={a} />)}
                <i className="ml-[12px] mr-[14px] mt-[10px] w-[2px] h-[55px] bg-[#d0560e]"></i>
                <div className="w-[180px] flex">{recents.map((a) => <DockApp key={a.name} app={a} />)}</div>
                <i className="ml-[12px] mt-[10px] w-[2px] h-[55px] bg-[#d0560e]"></i>
                <div className="w-[247px] pt-[9px] pl-[14px] pr-[5px] flex items-start justify-between">
                    <svg viewBox="0 0 36 54" className="mx-[10px] w-[34px] h-[52px]"><path d="M0 0h22l14 14v40H0z" fill="#f5f5f5" /><path d="M22 0v14h14z" fill="#ccc" /><path d="M4 10h14M4 15h12M4 20h24M4 25h20M4 30h25M4 35h18M4 40h22" stroke="#5aa266" /><text x="6" y="51" className="text-[10px]" fill="#555">DOCX</text></svg>
                    <svg viewBox="0 0 54 46" className="mt-[7px] w-[54px] h-[46px]"><path d="M0 0h54v38H0z" fill="#fafafa" /><path d="M4 6h12M4 11h10M4 16h12M20 8h18M20 14h14M20 20h16M20 26h12" stroke="#b9c4d4" /><path d="M42 8h8v6h-8z" fill="#f09a50" /><rect x="35" y="28" width="18" height="18" rx="4" fill="#2a86ea" /><path d="M49 32l-7 4 3 3z" fill="#f44" /></svg>
                    <svg viewBox="0 0 54 46" className="mt-[9px] ml-[5px] w-[54px] h-[46px]"><path d="M0 0h54v36H0z" fill="#3e2c22" /><path d="M2 4h7M2 8h7M2 16h7M2 20h7" stroke="#888" /><path d="M2 12h7" stroke="#3a80f0" strokeWidth="2" /><path d="M18 12h26M18 18h26M18 24h26" stroke="#111" strokeWidth="3" /><rect x="35" y="28" width="18" height="18" rx="4" fill="#eee" /><circle cx="44" cy="37" r="6" fill="#777" /></svg>
                    <svg viewBox="0 0 42 52" className="ml-[10px] w-[42px] h-[52px]"><path d="M1 4h40l-6 44q-14 6-28 0z" fill="#f2e4de" fillOpacity=".88" /><ellipse cx="21" cy="5" rx="20" ry="4.5" fill="#fff" /><ellipse cx="21" cy="6" rx="17" ry="3" fill="#cfc3bd" /></svg>
                </div>
            </div>
        </div>
    );
}

export default function App() {
    return (
        <div className="w-full h-screen flex flex-col overflow-hidden text-[21px] leading-[28px] font-['Noto_Sans','Noto_Sans_CJK_SC',sans-serif]">
            <MenuBar />
            <div className="flex-1 min-h-0 pt-px flex gap-[3px] bg-[linear-gradient(to_right,#3a86c8_1%,transparent_1%),linear-gradient(to_bottom,#f5a530_0%,#b8680f_15%,#a8540f_35%,#8a2a14_50%,#8f3014_80%,#c04a18_100%)]">
                <AuditionWindow title="Adobe Audition" className="flex-[2178_1_0%] mb-[3px]">
                    <Preferences place="left-[531px] top-[496px]" inDevice="设备: 系统默认 - M4" inRow="系统默认 - M4: In 2" />
                </AuditionWindow>
                <AuditionWindow title="Adobe Audition (Beta)" beta className="flex-[1915_1_0%]">
                    <Preferences front place="left-[173px] top-[491px]" inDevice="设备: M4" inRow="M4: In 2" />
                </AuditionWindow>
            </div>
            <Dock />
        </div>
    );
}
